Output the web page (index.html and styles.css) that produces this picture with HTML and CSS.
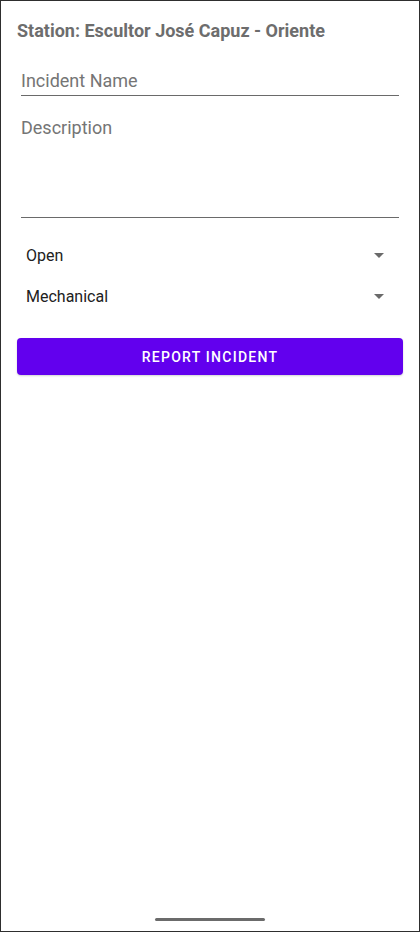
FILE: index.html
```html
<!DOCTYPE html>
<html lang="en">
<head>
<meta charset="utf-8">
<title>Report Incident</title>
<link rel="stylesheet" href="styles.css">
</head>
<body>
<div class="screen">
  <h1 class="station">Station: Escultor José Capuz - Oriente</h1>
  <div class="field field-name"><span class="placeholder">Incident Name</span></div>
  <div class="field field-desc"><span class="placeholder">Description</span></div>
  <div class="spinner spinner-first">
    <span class="spinner-text">Open</span>
    <span class="caret"></span>
  </div>
  <div class="spinner">
    <span class="spinner-text">Mechanical</span>
    <span class="caret"></span>
  </div>
  <button class="report-btn" type="button">REPORT INCIDENT</button>
  <div class="home-indicator"></div>
</div>
</body>
</html>
```
FILE: styles.css
```css
html, body {
  margin: 0;
  padding: 0;
  background: #ffffff;
}

.screen {
  box-sizing: border-box;
  width: 420px;
  height: 932px;
  border: 1px solid #2e2e2e;
  padding: 20px 16px 0 16px;
  display: flex;
  flex-direction: column;
  font-family: Roboto, "Liberation Sans", sans-serif;
  background: #ffffff;
}

.station {
  margin: 0;
  font-size: 18px;
  line-height: 20px;
  font-weight: 700;
  color: #6d6d6d;
}

.field {
  margin: 28px 4px 0 4px;
  border-bottom: 1px solid #6a6a6a;
  font-size: 18px;
  line-height: 24px;
  color: #757575;
}

.field-name {
  padding-bottom: 2px;
}

.field-desc {
  margin-top: 20px;
  height: 102px;
  box-sizing: border-box;
}

.spinner {
  display: flex;
  align-items: center;
  justify-content: space-between;
  height: 41px;
  padding: 0 19px 0 9px;
  font-size: 16px;
  color: #212121;
}

.spinner-first {
  margin-top: 17px;
}

.caret {
  width: 0;
  height: 0;
  border-left: 5px solid transparent;
  border-right: 5px solid transparent;
  border-top: 5px solid #6a6a6a;
}

.report-btn {
  margin-top: 21px;
  height: 37px;
  border: none;
  border-radius: 4px;
  background: #6200ee;
  color: #ffffff;
  font-family: Roboto, "Liberation Sans", sans-serif;
  font-size: 14px;
  font-weight: 500;
  letter-spacing: 1.25px;
  box-shadow: 0 1px 2px rgba(0, 0, 0, 0.18);
  padding: 0;
}

.home-indicator {
  margin: auto auto 10px auto;
  width: 110px;
  height: 3px;
  border-radius: 2px;
  background: #6b6b6b;
}
```
